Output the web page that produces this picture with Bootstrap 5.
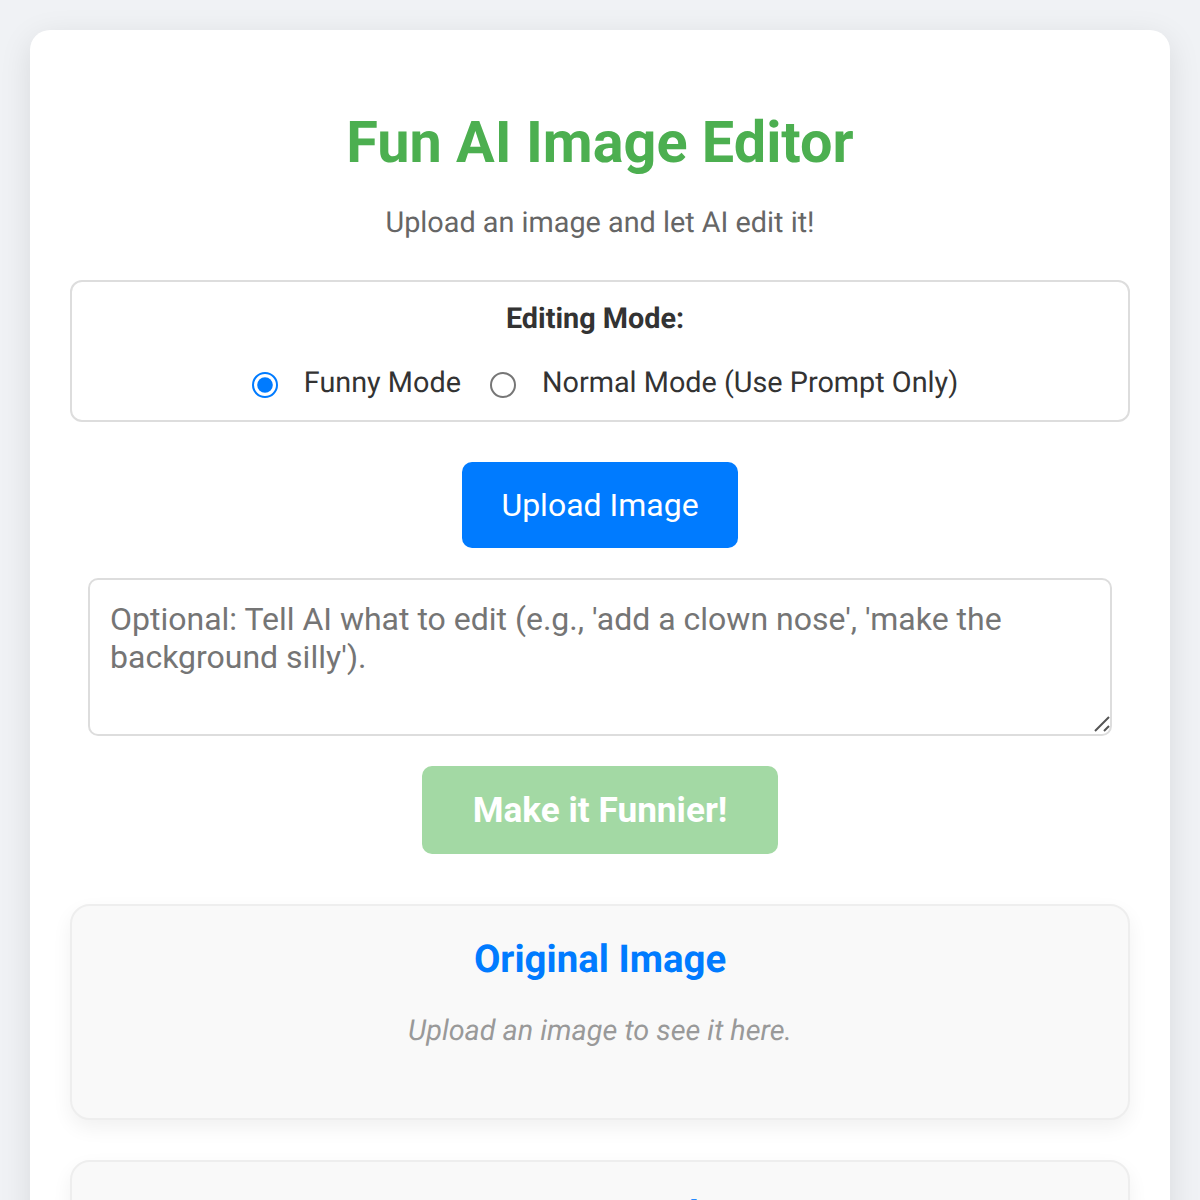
<!DOCTYPE html>
<html lang="en">
<head>
<meta charset="utf-8">
<title>Fun AI Image Editor</title>
<link href="https://cdn.jsdelivr.net/npm/bootstrap@5.3.0/dist/css/bootstrap.min.css" rel="stylesheet">
<style>
body{background:#f0f2f5;font-family:Roboto,"Liberation Sans",sans-serif;color:#333;padding:30px;margin:0;text-rendering:geometricPrecision}
.app-card{background:#fff;border:0;border-radius:20px;box-shadow:0 8px 32px rgba(0,0,0,.1);padding:40px;text-align:center}
.app-title{color:#4caf50;font-size:57.6px;font-weight:700;line-height:66px;margin:41px 0 0}
.app-sub{color:#666;font-size:28.8px;line-height:34px;margin:29px 0 40px}
.mode-box{border:2px solid #ddd;border-radius:12px;padding:20px;height:142px;margin-bottom:40px}
.mode-title{font-size:28.8px;font-weight:700;line-height:34px;margin:0 10px 0 0}
.mode-row{margin-top:30px;font-size:28.8px;line-height:34px;height:34px}
.mode-row input{zoom:2;margin:2px 0 0 5px;accent-color:#007bff;width:13px;height:13px}
.mode-row label{margin-left:26px;margin-right:19px}
.mode-row label:last-child{margin-right:0}
.btn-upload{background:#007bff;border:0;border-radius:10px;color:#fff;font-size:32px;line-height:38px;padding:24px 39px;height:86px;white-space:nowrap}
.btn-upload:hover{background:#007bff;color:#fff}
.prompt-wrap{position:relative;width:1024px;margin:30px auto}
.prompt{border:2px solid #ddd;border-radius:10px;font-size:32px;line-height:38px;padding:20px;height:158px;resize:none;color:#333;display:block;width:100%}
.prompt::placeholder{color:#757575;opacity:1}
.grip{position:absolute;right:2px;bottom:3px;width:18px;height:18px}
.btn-funny,.btn-funny:disabled{background:#a3d9a4;border:0;border-radius:10px;color:#fff;font-size:35.2px;font-weight:700;line-height:42px;padding:0;width:356px;height:88px;opacity:1}
.panel{background:#f9f9f9;border:2px solid #eee;border-radius:20px;box-shadow:0 8px 20px rgba(0,0,0,.06);height:216px;margin-top:50px;padding:31px 30px 30px}
.panel + .panel{margin-top:40px}
.panel h2{color:#007bff;font-size:38.4px;font-weight:700;line-height:46px;margin:0}
.panel p{color:#999;font-style:italic;font-size:28.8px;line-height:34px;margin:31px 0 0}
</style>
</head>
<body>
<main class="card app-card">
  <h1 class="app-title">Fun AI Image Editor</h1>
  <p class="app-sub">Upload an image and let AI edit it!</p>
  <section class="mode-box">
    <p class="mode-title">Editing Mode:</p>
    <div class="mode-row d-flex justify-content-center align-items-center">
      <input type="radio" name="mode" id="m1" checked><label for="m1">Funny Mode</label>
      <input type="radio" name="mode" id="m2"><label for="m2">Normal Mode (Use Prompt Only)</label>
    </div>
  </section>
  <div><button class="btn btn-upload" type="button">Upload Image</button></div>
  <div class="prompt-wrap">
    <textarea class="form-control prompt" placeholder="Optional: Tell AI what to edit (e.g., 'add a clown nose', 'make the background silly')."></textarea>
    <svg class="grip" viewBox="0 0 18 18" aria-hidden="true"><path d="M3 16 17 2M12 16l5-5" stroke="#555" stroke-width="2" fill="none"/></svg>
  </div>
  <div><button class="btn btn-funny" type="button" disabled>Make it Funnier!</button></div>
  <section class="panel">
    <h2>Original Image</h2>
    <p>Upload an image to see it here.</p>
  </section>
  <section class="panel">
    <h2>Funny Result</h2>
    <p>Your edited image will appear here.</p>
  </section>
</main>
<script src="https://cdn.jsdelivr.net/npm/bootstrap@5.3.0/dist/js/bootstrap.bundle.min.js"></script>
</body>
</html>
